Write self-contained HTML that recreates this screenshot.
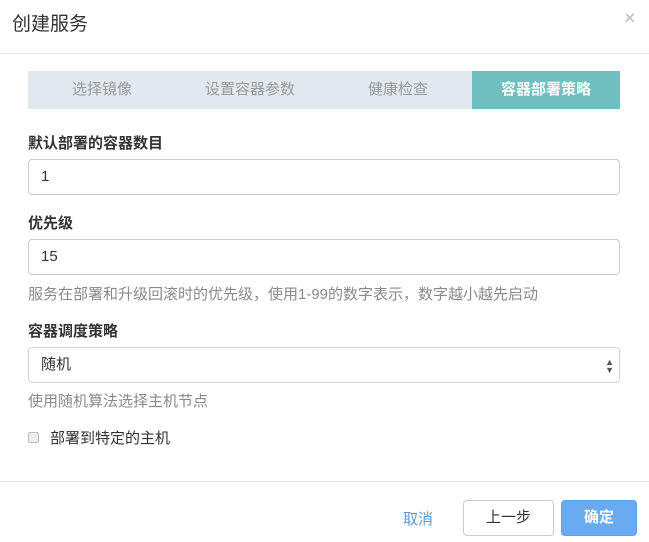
<!DOCTYPE html>
<html><head><meta charset="utf-8"><style>
*{box-sizing:border-box;margin:0;padding:0}
body{width:649px;height:542px;background:#fff;font-family:"Liberation Sans","Noto Sans CJK SC",sans-serif;position:relative;overflow:hidden;color:#333}
.a{position:absolute}
.title{left:12px;top:9px;font-size:19px;color:#333}
.x{right:14px;top:8px;font-size:18px;color:#c8c8c8;font-weight:bold}
.hr{left:0;width:649px;height:1px;background:#e5e5e5}
.tabs{left:28px;top:71px;width:592px;height:38px;background:#e1e8ee;display:flex}
.tabs div{flex:1;text-align:center;line-height:38px;font-size:15px;color:#999}
.tabs .on{background:#6fbfc0;color:#fff;font-weight:bold}
.lbl{left:28px;font-size:15px;font-weight:bold;color:#333}
.inp{left:28px;width:592px;height:36px;border:1px solid #ccc;border-radius:4px;padding-left:12px;line-height:34px;font-size:15px;color:#333}
.help{left:28px;font-size:15px;color:#8a8a8a}
.btn{height:36px;border-radius:4px;text-align:center;line-height:34px;font-size:15px}
</style></head><body>
<div class="a title">创建服务</div>
<div class="a x">×</div>
<div class="a hr" style="top:53px"></div>
<div class="a tabs"><div>选择镜像</div><div>设置容器参数</div><div>健康检查</div><div class="on">容器部署策略</div></div>
<div class="a lbl" style="top:132px">默认部署的容器数目</div>
<div class="a inp" style="top:159px">1</div>
<div class="a lbl" style="top:212px">优先级</div>
<div class="a inp" style="top:239px">15</div>
<div class="a help" style="top:283px">服务在部署和升级回滚时的优先级，使用1-99的数字表示，数字越小越先启动</div>
<div class="a lbl" style="top:320px">容器调度策略</div>
<div class="a inp" style="top:347px;border-color:#d5d5d5">随机<span style="position:absolute;right:5px;font-size:9px;line-height:8px;top:10px;color:#555">▲<br>▼</span></div>
<div class="a help" style="top:390px">使用随机算法选择主机节点</div>
<div class="a" style="left:28px;top:432px;width:11px;height:11px;border:1px solid #bbb;border-radius:2px;background:#eee"></div>
<div class="a" style="left:50px;top:427px;font-size:15px">部署到特定的主机</div>
<div class="a hr" style="top:481px"></div>
<div class="a" style="left:403px;top:508px;font-size:15px;color:#5b9bd5">取消</div>
<div class="a btn" style="left:463px;top:500px;width:91px;border:1px solid #ccc;color:#333">上一步</div>
<div class="a btn" style="left:561px;top:500px;width:76px;background:#6aaaf0;color:#fff;font-weight:bold;border:1px solid #5ea0ea">确定</div>
</body></html>
